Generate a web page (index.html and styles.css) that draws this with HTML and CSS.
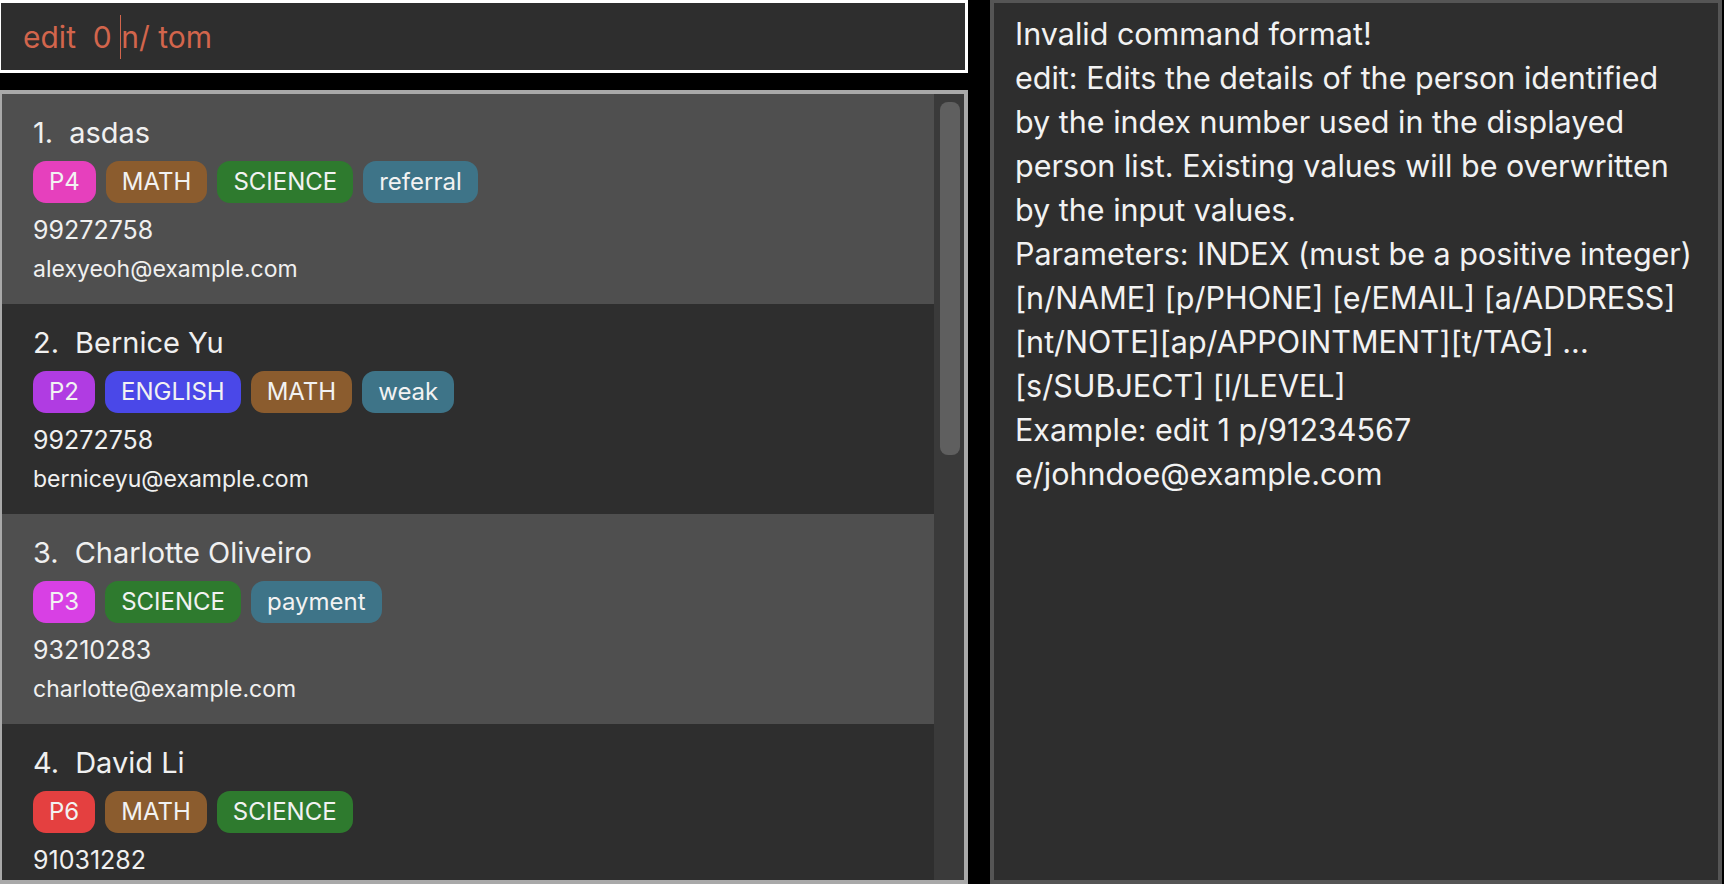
FILE: index.html
```html
<!DOCTYPE html>
<html>
<head>
<meta charset="utf-8">
<link rel="stylesheet" href="styles.css">
</head>
<body>
<div class="app">
  <div class="left">
    <div class="command-box"><span class="cmd-text">edit&nbsp;&nbsp;0 </span><span class="caret"></span><span class="cmd-text">n/ tom</span></div>
    <div class="list-panel">
      <div class="cards">
        <div class="card odd">
          <div class="name-row"><span class="idx">1.</span><span class="name">asdas</span></div>
          <div class="tags"><span class="tag p4">P4</span><span class="tag math">MATH</span><span class="tag science">SCIENCE</span><span class="tag note">referral</span></div>
          <div class="detail phone">99272758</div>
          <div class="detail email">alexyeoh@example.com</div>
        </div>
        <div class="card even">
          <div class="name-row"><span class="idx">2.</span><span class="name">Bernice Yu</span></div>
          <div class="tags"><span class="tag p2">P2</span><span class="tag english">ENGLISH</span><span class="tag math">MATH</span><span class="tag note">weak</span></div>
          <div class="detail phone">99272758</div>
          <div class="detail email">berniceyu@example.com</div>
        </div>
        <div class="card odd">
          <div class="name-row"><span class="idx">3.</span><span class="name">Charlotte Oliveiro</span></div>
          <div class="tags"><span class="tag p3">P3</span><span class="tag science">SCIENCE</span><span class="tag note">payment</span></div>
          <div class="detail phone">93210283</div>
          <div class="detail email">charlotte@example.com</div>
        </div>
        <div class="card even last">
          <div class="name-row"><span class="idx">4.</span><span class="name">David Li</span></div>
          <div class="tags"><span class="tag p6">P6</span><span class="tag math">MATH</span><span class="tag science">SCIENCE</span></div>
          <div class="detail phone">91031282</div>
        </div>
      </div>
      <div class="scroll-track"><div class="scroll-thumb"></div></div>
    </div>
  </div>
  <div class="result-panel">
    <div class="line">Invalid command format!</div>
    <div class="line">edit: Edits the details of the person identified</div>
    <div class="line">by the index number used in the displayed</div>
    <div class="line">person list. Existing values will be overwritten</div>
    <div class="line">by the input values.</div>
    <div class="line">Parameters: INDEX (must be a positive integer)</div>
    <div class="line">[n/NAME] [p/PHONE] [e/EMAIL] [a/ADDRESS]</div>
    <div class="line">[nt/NOTE][ap/APPOINTMENT][t/TAG] ...</div>
    <div class="line">[s/SUBJECT] [l/LEVEL]</div>
    <div class="line">Example: edit 1 p/91234567</div>
    <div class="line">e/johndoe@example.com</div>
  </div>
</div>
</body>
</html>
```
FILE: styles.css
```css
* { box-sizing: border-box; }
html, body {
  margin: 0;
  padding: 0;
  background: #000;
  height: 884px;
  overflow: hidden;
}
body {
  font-family: Inter, "Open Sans", "Liberation Sans", sans-serif;
  color: #eeeeee;
}
.app {
  display: flex;
  height: 884px;
}
.left {
  width: 968px;
  display: flex;
  flex-direction: column;
}
.command-box {
  height: 73px;
  background: #2e2e2e;
  border: 3px solid #ffffff;
  border-left-width: 1px;
  padding: 2px 0 0 22px;
  line-height: 65px;
  font-size: 30px;
  color: #d2654c;
  white-space: pre;
}
.caret {
  display: inline-block;
  width: 1px;
  height: 44px;
  background: #d2654c;
  vertical-align: -11px;
}
.list-panel {
  margin-top: 17px;
  flex: 1;
  display: flex;
  border: 4px solid #a9a9a9;
  border-left-width: 2px;
  background: #2e2e2e;
  overflow: hidden;
}
.cards {
  flex: 1;
  overflow: hidden;
}
.card {
  height: 210px;
  padding: 21px 0 0 31px;
}
.card.last { height: 185px; }
.card.odd { background: #4f4f4f; }
.card.even { background: #2e2e2e; }
.name-row {
  display: flex;
  gap: 16px;
  font-size: 29px;
  line-height: 36px;
  color: #f0f0f0;
}
.tags {
  display: flex;
  gap: 10px;
  margin-top: 10px;
}
.tag {
  height: 42px;
  line-height: 42px;
  padding: 0 16px;
  border-radius: 13px;
  font-size: 24px;
  color: #f2f2f2;
}
.p4 { background: #e640bd; }
.p2 { background: #b03ce2; }
.p3 { background: #d840e4; }
.p6 { background: #e44040; }
.math { background: #8b5c2e; }
.science { background: #2e7a2e; }
.english { background: #4a48e8; }
.note { background: #3e7488; }
.detail {
  line-height: 39px;
  color: #f0f0f0;
}
.detail.phone {
  font-size: 25px;
  margin-top: 8px;
}
.detail.email {
  font-size: 23px;
}
.scroll-track {
  width: 30px;
  background: #3a3a3a;
  padding: 8px 4px 0 6px;
}
.scroll-thumb {
  height: 353px;
  border-radius: 8px;
  background: #5f5f5f;
}
.result-panel {
  margin-left: 22px;
  width: 732px;
  height: 884px;
  background: #2e2e2e;
  border: 4px solid #555555;
  border-top-width: 3px;
  padding: 9px 0 0 21px;
  font-size: 30.5px;
  line-height: 44px;
  color: #f2f2f2;
}
.line { white-space: nowrap; }
```
